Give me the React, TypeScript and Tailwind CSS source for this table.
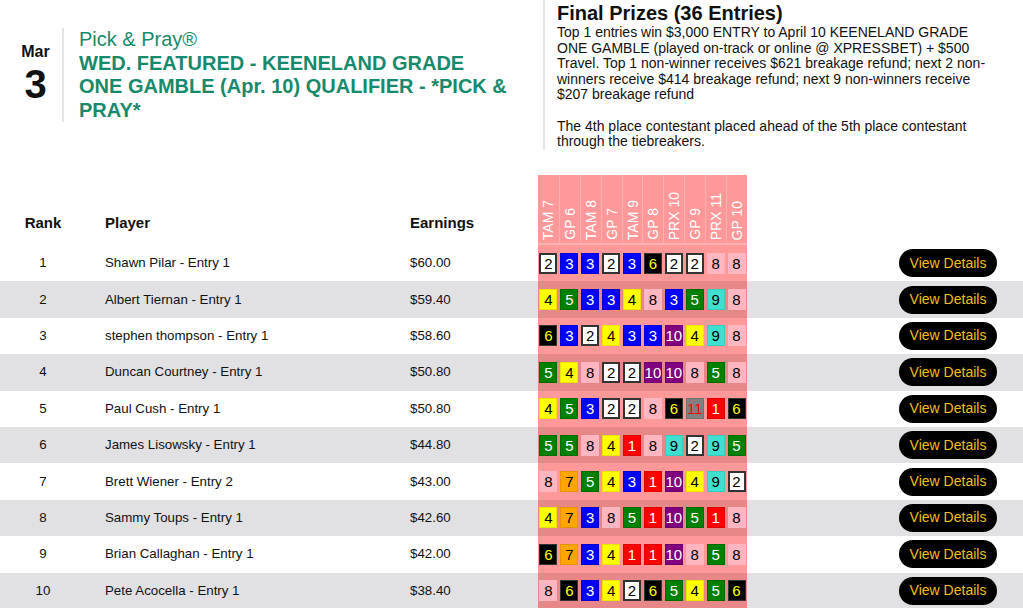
import React from "react";

type Row = { rank: number; player: string; earnings: string; picks: number[] };

const rows: Row[] = [
  { rank: 1, player: "Shawn Pilar - Entry 1", earnings: "$60.00", picks: [2, 3, 3, 2, 3, 6, 2, 2, 8, 8] },
  { rank: 2, player: "Albert Tiernan - Entry 1", earnings: "$59.40", picks: [4, 5, 3, 3, 4, 8, 3, 5, 9, 8] },
  { rank: 3, player: "stephen thompson - Entry 1", earnings: "$58.60", picks: [6, 3, 2, 4, 3, 3, 10, 4, 9, 8] },
  { rank: 4, player: "Duncan Courtney - Entry 1", earnings: "$50.80", picks: [5, 4, 8, 2, 2, 10, 10, 8, 5, 8] },
  { rank: 5, player: "Paul Cush - Entry 1", earnings: "$50.80", picks: [4, 5, 3, 2, 2, 8, 6, 11, 1, 6] },
  { rank: 6, player: "James Lisowsky - Entry 1", earnings: "$44.80", picks: [5, 5, 8, 4, 1, 8, 9, 2, 9, 5] },
  { rank: 7, player: "Brett Wiener - Entry 2", earnings: "$43.00", picks: [8, 7, 5, 4, 3, 1, 10, 4, 9, 2] },
  { rank: 8, player: "Sammy Toups - Entry 1", earnings: "$42.60", picks: [4, 7, 3, 8, 5, 1, 10, 5, 1, 8] },
  { rank: 9, player: "Brian Callaghan - Entry 1", earnings: "$42.00", picks: [6, 7, 3, 4, 1, 1, 10, 8, 5, 8] },
  { rank: 10, player: "Pete Acocella - Entry 1", earnings: "$38.40", picks: [8, 6, 3, 4, 2, 6, 5, 4, 5, 6] },
];

const races = ["TAM 7", "GP 6", "TAM 8", "GP 7", "TAM 9", "GP 8", "PRX 10", "GP 9", "PRX 11", "GP 10"];

// saddle cloth colours by post position
const cloth: Record<number, string> = {
  1: "bg-[#ff0000] text-white border border-[#e00000]",
  2: "bg-white text-black border-2 border-[#333]",
  3: "bg-[#0000ff] text-white border border-[#0000cc]",
  4: "bg-[#ffff00] text-black border border-[#e6e600]",
  5: "bg-[#008000] text-white border border-[#006c00]",
  6: "bg-black text-[#ffff00] border border-[#333]",
  7: "bg-[#ffa500] text-black border border-[#e69500]",
  8: "bg-[#ffb6c1] text-black border border-[#ffb6c1]",
  9: "bg-[#40e0d0] text-black border border-[#38cbbc]",
  10: "bg-[#800080] text-white border border-[#6a006a]",
  11: "bg-[#808080] text-[#ff0000] border border-[#707070]",
};

const Pick = ({ n }: { n: number }) => (
  <div className="flex justify-center">
    <div className={`w-[18px] h-[21px] flex items-center justify-center text-[15px] leading-none ${cloth[n]}`}>
      {n}
    </div>
  </div>
);

export default function App() {
  return (
    <div className="w-full bg-white text-[#111] font-['Liberation_Sans',Arial,sans-serif]">
      {/* header */}
      <div className="flex items-center h-[150px]">
        <div className="w-[543px] flex items-center pl-[14px]">
          <div className="w-[43px] flex flex-col items-center font-bold">
            <div className="text-[16px] leading-[18px]">Mar</div>
            <div className="text-[40px] leading-[46px]">3</div>
          </div>
          <div className="ml-[5px] w-[2px] self-stretch bg-[#e4e4e4]" />
          <div className="ml-[15px] w-[432px] text-[20px] leading-[23.5px] text-[#178a6c]">
            <div>Pick &amp; Pray®</div>
            <div className="font-bold">WED. FEATURED - KEENELAND GRADE ONE GAMBLE (Apr. 10) QUALIFIER - *PICK &amp; PRAY*</div>
          </div>
        </div>
        <div className="h-[150px] border-l-2 border-[#e4e4e4] pl-[12px] w-[465px]">
          <div className="text-[20px] leading-[22px] font-bold mt-[2px]">Final Prizes (36 Entries)</div>
          <div className="text-[14px] leading-[15.6px] w-[445px] mt-[1px]">
            Top 1 entries win $3,000 ENTRY to April 10 KEENELAND GRADE ONE GAMBLE (played on-track or online @ XPRESSBET) + $500 Travel. Top 1 non-winner receives $621 breakage refund; next 2 non-winners receive $414 breakage refund; next 9 non-winners receive $207 breakage refund
            <br />
            <br />
            The 4th place contestant placed ahead of the 5th place contestant through the tiebreakers.
          </div>
        </div>
      </div>

      {/* table */}
      <div className="mt-[25px] text-[13.3px]">
        <div className="flex h-[70px] items-end text-[15px] font-bold">
          <div className="w-[86px] text-center pb-[11px]">Rank</div>
          <div className="w-[324px] pl-[19px] pb-[11px]">Player</div>
          <div className="w-[128px] pb-[11px]">Earnings</div>
          <div className="w-[209px] h-full grid grid-cols-10 bg-[#ff9999] border-b-2 border-[#ffb3b3]">
            {races.map((r, i) => (
              <div
                key={r}
                className={`flex items-end justify-center pb-[3px] ${i > 0 ? "border-l border-[#ffb0b0]" : ""}`}
              >
                <span className="[writing-mode:vertical-rl] rotate-180 text-white text-[14px] font-normal leading-[16px] whitespace-nowrap">
                  {r}
                </span>
              </div>
            ))}
          </div>
          <div className="flex-1" />
        </div>

        {rows.map((row, idx) => {
          const even = idx % 2 === 1;
          return (
            <div key={row.rank} className={`flex items-center h-[36.4px] ${even ? "bg-[#e1e1e3]" : "bg-white"}`}>
              <div className="w-[86px] text-center">{row.rank}</div>
              <div className="w-[324px] pl-[19px]">{row.player}</div>
              <div className="w-[128px]">{row.earnings}</div>
              <div className={`w-[209px] h-full grid grid-cols-10 items-center ${even ? "bg-[#e88787]" : "bg-[#ff9999]"}`}>
                {row.picks.map((p, i) => (
                  <Pick key={i} n={p} />
                ))}
              </div>
              <div className="flex-1 flex justify-end pr-[26px]">
                <button className="w-[98px] h-[28px] rounded-full bg-black text-[#f0bf1a] text-[14px]">
                  View Details
                </button>
              </div>
            </div>
          );
        })}
      </div>
    </div>
  );
}
